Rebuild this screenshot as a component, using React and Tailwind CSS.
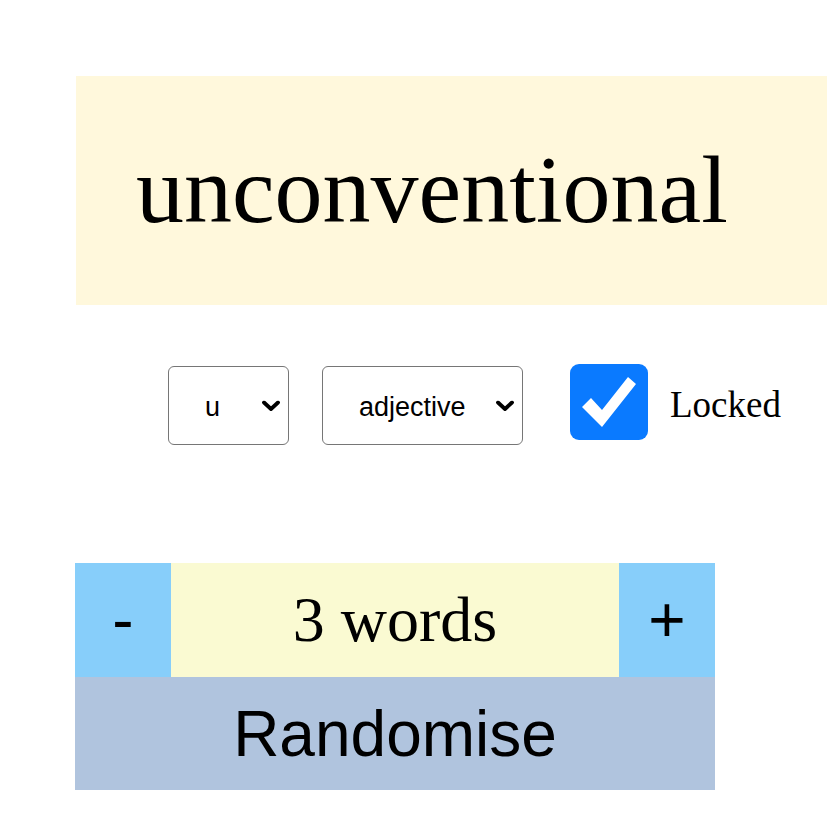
import { useState } from 'react'

function Chevron() {
  return (
    <svg
      className="pointer-events-none absolute right-[9px] top-1/2 -translate-y-1/2"
      width="18"
      height="11"
      viewBox="0 0 18 11"
      fill="none"
    >
      <path d="M2 2 L9 8.5 L16 2" stroke="#000" strokeWidth="3.8" strokeLinecap="round" strokeLinejoin="round" />
    </svg>
  )
}

function Dropdown({ value, options, width, onChange }) {
  return (
    <div className="relative" style={{ width }}>
      <select
        value={value}
        onChange={(e) => onChange(e.target.value)}
        className="appearance-none w-full h-[79px] pl-[36px] pr-[30px] pt-[3px] bg-white border border-[#767676] rounded-[6px] text-[27px] text-black font-['Liberation_Sans',Arial,sans-serif] outline-none"
      >
        {options.map((o) => (
          <option key={o} value={o}>
            {o}
          </option>
        ))}
      </select>
      <Chevron />
    </div>
  )
}

export default function App() {
  const [letter, setLetter] = useState('u')
  const [kind, setKind] = useState('adjective')
  const [locked, setLocked] = useState(true)
  const [count, setCount] = useState(3)

  return (
    <div className="min-h-[826px] bg-white pt-[76px] font-['Liberation_Serif','Times_New_Roman',serif] text-black">
      {/* Current word */}
      <div className="ml-[76px] bg-[#fff8dc] pl-[60px] pt-[59px] pb-[60px]">
        <p className="text-[96px] leading-[110px] whitespace-nowrap">unconventional</p>
      </div>

      {/* Word controls */}
      <div className="flex items-start pl-[168px] mt-[59px]">
        <div className="mt-[2px]">
          <Dropdown value={letter} options={['a', 'b', 'c', 'u']} width={121} onChange={setLetter} />
        </div>
        <div className="mt-[2px] ml-[33px]">
          <Dropdown value={kind} options={['noun', 'verb', 'adjective', 'adverb']} width={201} onChange={setKind} />
        </div>
        <label className="flex items-center ml-[47px] cursor-pointer">
          <button
            type="button"
            onClick={() => setLocked(!locked)}
            className={`w-[78px] h-[76px] rounded-[9px] flex items-center justify-center ${
              locked ? 'bg-[#0a7aff]' : 'bg-white border border-[#767676]'
            }`}
          >
            {locked && (
              <svg width="78" height="76" viewBox="0 0 78 76">
                <polygon points="12,43 21,34 32,46 58,13 66,20 32,63" fill="#fff" />
              </svg>
            )}
          </button>
          <span className="ml-[22px] mt-[5px] text-[37px] leading-[42px]">Locked</span>
        </label>
      </div>

      {/* Word count + randomise */}
      <div className="ml-[75px] mt-[118px] w-[640px]">
        <div className="flex h-[114px]">
          <button
            type="button"
            onClick={() => setCount(Math.max(1, count - 1))}
            className="w-[96px] bg-[#87cefa] flex items-center justify-center text-[64px] font-['Liberation_Sans',Arial,sans-serif]"
          >
            -
          </button>
          <div className="flex-1 bg-[#fafad2] flex items-center justify-center text-[64px] leading-[74px]">
            {count} words
          </div>
          <button
            type="button"
            onClick={() => setCount(count + 1)}
            className="w-[96px] bg-[#87cefa] flex items-center justify-center text-[64px] font-['Liberation_Sans',Arial,sans-serif]"
          >
            +
          </button>
        </div>
        <button
          type="button"
          className="w-full h-[113px] bg-[#b0c4de] flex items-center justify-center text-[64px] leading-[74px] font-['Liberation_Sans',Arial,sans-serif]"
        >
          Randomise
        </button>
      </div>
    </div>
  )
}
